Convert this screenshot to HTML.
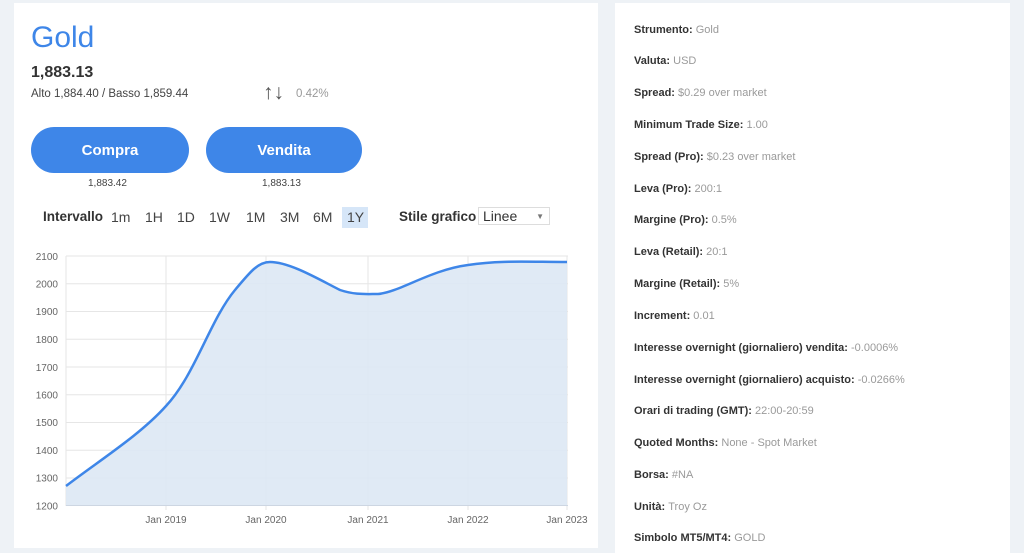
<!DOCTYPE html>
<html><head><style>
body{margin:0;width:1024px;height:553px;background:#eef2f6;font-family:"Liberation Sans",sans-serif;position:relative;overflow:hidden}
.card{position:absolute;background:#fff}
.t{position:absolute;white-space:nowrap}
.btn{position:absolute;height:46px;border-radius:23px;background:#3e86e8;color:#fff;font-weight:bold;font-size:15px;text-align:center;line-height:48px}
.row{position:absolute;left:634px;font-size:11px;font-weight:bold;color:#333;white-space:nowrap}
.row span{font-weight:normal;color:#9a9a9a}
.iv{position:absolute;top:209px;font-size:14px;color:#444}
</style></head><body>
<div class="card" style="left:14px;top:3px;width:584px;height:545px"></div>
<div class="card" style="left:615px;top:3px;width:395px;height:550px"></div>
<div class="t" style="left:31px;top:21px;font-size:30px;color:#3e86e8">Gold</div>
<div class="t" style="left:31px;top:64px;font-size:16px;font-weight:bold;color:#333">1,883.13</div>
<div class="t" style="left:31px;top:88px;font-size:11.5px;color:#444">Alto 1,884.40 / Basso 1,859.44</div>
<div class="t" style="left:263px;top:81px;font-size:21px;color:#555">↑↓</div>
<div class="t" style="left:296px;top:88px;font-size:11.5px;color:#999">0.42%</div>
<div class="btn" style="left:31px;top:127px;width:158px">Compra</div>
<div class="btn" style="left:206px;top:127px;width:156px">Vendita</div>
<div class="t" style="left:88px;top:178px;font-size:10px;color:#444">1,883.42</div>
<div class="t" style="left:262px;top:178px;font-size:10px;color:#444">1,883.13</div>
<div class="iv" style="left:43px;font-weight:bold;color:#333;font-size:13.5px">Intervallo</div>
<div class="iv" style="left:111px">1m</div>
<div class="iv" style="left:145px">1H</div>
<div class="iv" style="left:177px">1D</div>
<div class="iv" style="left:209px">1W</div>
<div class="iv" style="left:246px">1M</div>
<div class="iv" style="left:280px">3M</div>
<div class="iv" style="left:313px">6M</div>
<div style="position:absolute;left:342px;top:207px;width:26px;height:21px;background:#d6e6f8"></div>
<div class="iv" style="left:347px">1Y</div>
<div class="iv" style="left:399px;font-weight:bold;color:#333;font-size:13.5px">Stile grafico</div>
<div style="position:absolute;left:478px;top:207px;width:72px;height:18px;border:1px solid #ddd;box-sizing:border-box;font-size:14px;color:#333;line-height:17px;padding-left:4px">Linee<span style="position:absolute;right:5px;font-size:8px;color:#777">▼</span></div>
<svg style="position:absolute;left:0;top:240px" width="600" height="300">
<g stroke="#e6e6e6" stroke-width="1">
<line x1="66" y1="16" x2="568" y2="16"/><line x1="66" y1="43.8" x2="568" y2="43.8"/><line x1="66" y1="71.5" x2="568" y2="71.5"/><line x1="66" y1="99.3" x2="568" y2="99.3"/><line x1="66" y1="127" x2="568" y2="127"/><line x1="66" y1="154.8" x2="568" y2="154.8"/><line x1="66" y1="182.5" x2="568" y2="182.5"/><line x1="66" y1="210.3" x2="568" y2="210.3"/><line x1="66" y1="238" x2="568" y2="238"/>
<line x1="66" y1="16" x2="66" y2="266"/><line x1="166" y1="16" x2="166" y2="270"/><line x1="266" y1="16" x2="266" y2="270"/><line x1="368" y1="16" x2="368" y2="270"/><line x1="468" y1="16" x2="468" y2="270"/><line x1="567" y1="16" x2="567" y2="270"/>
</g>
<path d="M66,246 C100,220 140,195 166,166 C195,135 210,80 235,50 C250,32 258,22 270,22 C290,22 320,40 340,50 C355,55 365,54 378,54 C400,52 430,30 468,25 C500,20 530,22 567,22 L567,265.5 L66,265.5 Z" fill="#dde8f4" fill-opacity="0.9"/>
<path d="M66,246 C100,220 140,195 166,166 C195,135 210,80 235,50 C250,32 258,22 270,22 C290,22 320,40 340,50 C355,55 365,54 378,54 C400,52 430,30 468,25 C500,20 530,22 567,22" fill="none" stroke="#3e86e8" stroke-width="2.5"/>
<line x1="66" y1="265.5" x2="568" y2="265.5" stroke="#cdd6e2"/>
<g font-size="10" fill="#666" text-anchor="end">
<text x="58" y="20">2100</text><text x="58" y="47.5">2000</text><text x="58" y="75">1900</text><text x="58" y="103">1800</text><text x="58" y="131">1700</text><text x="58" y="158.5">1600</text><text x="58" y="186">1500</text><text x="58" y="214">1400</text><text x="58" y="241.5">1300</text><text x="58" y="269.5">1200</text>
</g>
<g font-size="10" fill="#666" text-anchor="middle">
<text x="166" y="283">Jan 2019</text><text x="266" y="283">Jan 2020</text><text x="368" y="283">Jan 2021</text><text x="468" y="283">Jan 2022</text><text x="567" y="283">Jan 2023</text>
</g>
</svg>
<div class="row" style="top:24px">Strumento: <span>Gold</span></div>
<div class="row" style="top:55px">Valuta: <span>USD</span></div>
<div class="row" style="top:87px">Spread: <span>$0.29 over market</span></div>
<div class="row" style="top:119px">Minimum Trade Size: <span>1.00</span></div>
<div class="row" style="top:151px">Spread (Pro): <span>$0.23 over market</span></div>
<div class="row" style="top:183px">Leva (Pro): <span>200:1</span></div>
<div class="row" style="top:214px">Margine (Pro): <span>0.5%</span></div>
<div class="row" style="top:246px">Leva (Retail): <span>20:1</span></div>
<div class="row" style="top:278px">Margine (Retail): <span>5%</span></div>
<div class="row" style="top:310px">Increment: <span>0.01</span></div>
<div class="row" style="top:342px">Interesse overnight (giornaliero) vendita: <span>-0.0006%</span></div>
<div class="row" style="top:374px">Interesse overnight (giornaliero) acquisto: <span>-0.0266%</span></div>
<div class="row" style="top:405px">Orari di trading (GMT): <span>22:00-20:59</span></div>
<div class="row" style="top:437px">Quoted Months: <span>None - Spot Market</span></div>
<div class="row" style="top:469px">Borsa: <span>#NA</span></div>
<div class="row" style="top:501px">Unità: <span>Troy Oz</span></div>
<div class="row" style="top:532px">Simbolo MT5/MT4: <span>GOLD</span></div>
</body></html>
